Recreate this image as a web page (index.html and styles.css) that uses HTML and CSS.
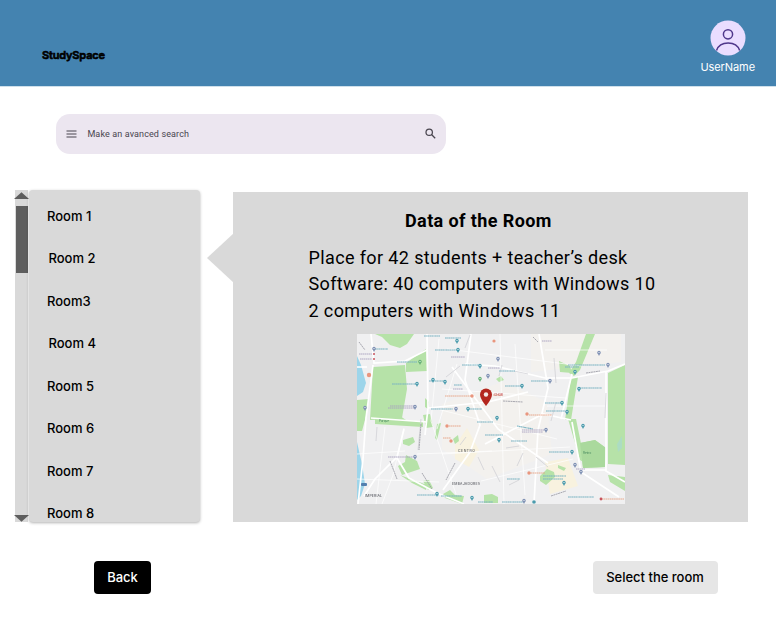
FILE: index.html
```html
<!DOCTYPE html>
<html lang="en">
<head>
<meta charset="utf-8">
<title>StudySpace</title>
<link rel="stylesheet" href="styles.css">
</head>
<body>
<header class="topbar">
  <div class="brand">StudySpace</div>
  <div class="user">
    <svg class="avatar" viewBox="0 0 36 36"><circle cx="18" cy="18" r="17.5" fill="#eaddff"/><g fill="none" stroke="#4f378b" stroke-width="1.5"><circle cx="18" cy="14.3" r="4.6"/><path d="M6.500 30.500C10 20.500 26.300 20.500 29.700 30.500"/></g></svg>
    <span class="username">UserName</span>
  </div>
</header>
<div class="search">
  <svg class="menu-icon" viewBox="0 0 11 8"><path d="M.5 1h10M.5 4h10M.5 7h10" stroke="#49454f" stroke-width="1.15"/></svg>
  <span class="placeholder">Make an avanced search</span>
  <svg class="search-icon" viewBox="0 0 11 11"><g fill="none" stroke="#49454f" stroke-width="1.25"><circle cx="4.200" cy="4.200" r="3.200"/><path d="M6.500 6.500l3.700 3.700"/></g></svg>
</div>
<main class="content">
  <div class="scrollbar">
    <svg class="arrow" viewBox="0 0 15 7"><path d="M0 7L7.500 .3 15 7z" fill="#5e5e5e"/></svg>
    <div class="thumb"></div>
    <svg class="arrow arrow-down" viewBox="0 0 15 7"><path d="M0 0L7.500 6.700 15 0z" fill="#5e5e5e"/></svg>
  </div>
  <ul class="rooms">
    <li>Room 1</li><li class="inset">Room 2</li><li>Room3</li><li class="inset">Room 4</li><li>Room 5</li><li>Room 6</li><li>Room 7</li><li>Room 8</li>
  </ul>
  <svg class="pointer" viewBox="0 0 27 50"><path d="M27 0v50L0 25z" fill="#d9d9d9"/></svg>
  <section class="panel">
    <h1>Data of the Room</h1>
    <p class="details"><span>Place for 42 students + teacher’s desk</span><span>Software: 40 computers with Windows 10</span><span>2 computers with Windows 11</span></p>
    <svg class="map" viewBox="0 0 268 170">
      <rect width="268" height="170" fill="#f0f0f1"/>
      <g class="terrain">
      <path d="M85 70L145 48 190 68 195 120 130 145 85 115zM174 0h90v28l-90 10z" fill="#f3f1ee"/>
      <path d="M98 112l12-18 12 22-10 17-14-8zM188 128l23-4 10 28-28 8z" fill="#f8f2df"/>
      <g fill="#b6e2a8">
        <path d="M18 0h39l-7 10-7 4-10-3-8-8z"/>
        <path d="M16 33l32-2 2 24-5 29-32 2zM49 29l20-14 1 22-21 1zM0 66l12-1-3 17-4 15H0z"/>
        <path d="M18 83l25-1 6 4 17 2v5l-48-3zM66 81l7-1 3 13-7 1zM46 106l10-3 2 5-6 4-6-2z"/>
        <path d="M41 132l7-4 1-7 11 6 3 8-9 3-9 3zM43 141l27 10-1 5-14-7zM66 147l6-1 4 8-5 2zM86 160l7-4 5 5 9 1-2 8-17-6z"/>
        <path d="M229 0h9l-15 36-6 6-5-3 7-11zM214 43h7l-7 43h-6zM211 85h8l9 44-5-3z"/>
        <path d="M251 39l17-8v100l-17-1zM251 141l17 2v14l-15-9zM223 109l15-3 11 8-1 19-22 1z"/>
        <path d="M202 27l11 5 2 7-12-1zM183 142l7-7 7 3 1 5-9 8-6-4zM127 161l8-1 6 3v6h-14zM96 105l5-4 1 6-4 3zM80 90l4-1-4 17-2-2zM68 64l4 4-1 7-3-2zM139 45l5-3 3 4-5 2zM201 131l8 3-2 3-6-3z"/>
      </g>
      <path d="M223 109l15-3 11 8-1 19-22 1z" fill="#aad99d"/>
      <g fill="#9dd5ea"><path d="M0 22l4 9 5 18-3 9-6 4zM0 108l5 22 3 20-4 12-4 4z"/><path d="M260 110l5-8v12l-4 4z" opacity=".4"/></g>
      <g fill="none" stroke="#fff" stroke-width="1.700">
        <path d="M14 0l3 29 31-2 22-11M16 31L9 84 6 125 1 170M14 84l56 4M47 95l-7 28-22 22-11 17"/>
        <path d="M70 0l1 74-3 27M40 124l12 20 28 15 27 11M71 74l60-6 40-10"/>
        <path d="M0 33h10M108 30l30 2 50 12 27 0 36-7 17-7M114 0l-6 46 15 45-10 27-27 38M182 0l9 54-10 42-4 74M215 40l-11 45M215 88l9 50 38 25"/>
        <path d="M249 38v99l19 11M225 136h24M95 33l46 62 50 34M128 110l58-30 28 6"/>
      </g>
      <g fill="none" stroke="#fff" stroke-width=".7"><path d="M28 93l-9 77M47 94l-11 47-11 29M82 5l-8 82 25 73M143 0l4 170M158 10l10 151M90 15l135 17M80 75l120 30M85 120l128-7M85 55l124 9M188 16h62M190 72h60M100 30l-20 65M60 120l75-3M124 147l92-22M0 120l48-3M0 145l82 3"/></g>
      </g>
      <g class="labels">
      <g fill="none" stroke="#d0d1d6" stroke-width=".8"><path d="M89 43l14-11M113 1l-5 13M142 42l3-11M197 24l2 25M199 68l-5 19M249 59l-1 25M64 85l-3 31M157 37l14 3M160 132l6-13M179 123l12 10M121 123l6 13M135 132l8 16M20 93l-1 14M109 103l-6 8M149 114l13-2M152 151l10-5"/></g>
      <g fill="none" stroke="#96969f" stroke-width=".8" stroke-dasharray="2 .5"><path d="M64 90l-2 26M33 127l7 18M65 139l10 16M98 129l-9 17M229 39l14-2M194 162l15-5M2 8l6 8M146 67l20 1M176 3l5 5"/></g>
      <g fill="none" stroke="#78b2c2" stroke-width="1.100" stroke-dasharray="1.800 .35 1.200 .3">
        <path d="M18 15h13M67 2h16M88 4h16M78 16h23M105 31h17M40 28h20M35 50h24M72 47h15M97 51h8M142 37h16M174 47h18M148 52h16M221 54h24M211 31h21M188 69h17M189 77h19M232 31h16M208 33h14M112 75h13M74 75h22M120 88h16M160 92l16 3M128 101h18M154 107h16M192 118h20M186 142h23M186 145h20M150 145h13M60 161h22M84 162h21M121 168h15M145 168h22M211 163h26"/></g>
      <g fill="none" stroke="#a8a0c0" stroke-width=".9" stroke-dasharray="1.500 .4"><path d="M33 72h24M31 74h27M31 123h25M2 20h13M3 25h12M94 23h14M131 34h12M185 7h10M165 96h22M165 98h21M219 135h9M96 55h10"/></g>
      <g fill="none" stroke="#e6a082" stroke-width=".9" stroke-dasharray="1.500 .4"><path d="M88 62h26M136 61h9M172 81h23M92 92h12M86 104h8M172 139h16M245 165h22"/></g>
      <g class="map-label">
        <text x="101" y="118" textLength="17">CENTRO</text><text x="95" y="151" textLength="28">EMBAJADORES</text><text x="8" y="163" textLength="17">IMPERIAL</text>
        <text x="137" y="62" class="red" textLength="9">CHOR</text><text x="226" y="120" class="park">Retiro</text><text x="22" y="88" class="park">Parque</text>
      </g>
      <defs><g id="place"><circle cy="-1.500" r="1.700"/><path d="M-1.500-1L0 1.900 1.500-1z"/><circle cy="-1.500" r=".6" fill="#fff"/></g></defs>
      <g fill="#4b9bad"><use href="#place" x="100" y="8"/><use href="#place" x="101" y="17"/><use href="#place" x="123" y="33"/><use href="#place" x="76" y="47"/><use href="#place" x="88" y="49"/><use href="#place" x="60" y="51"/><use href="#place" x="111" y="76"/><use href="#place" x="165" y="53"/><use href="#place" x="218" y="39"/><use href="#place" x="222" y="56"/><use href="#place" x="205" y="70"/><use href="#place" x="210" y="79"/><use href="#place" x="140" y="85"/><use href="#place" x="142" y="107"/><use href="#place" x="215" y="119"/><use href="#place" x="226" y="93"/><use href="#place" x="207" y="150"/><use href="#place" x="80" y="161"/><use href="#place" x="115" y="165"/><circle cx="177" cy="168" r="1.800"/></g>
      <g fill="#7f91b4"><use href="#place" x="17" y="16"/><use href="#place" x="141" y="26"/><use href="#place" x="193" y="48"/><use href="#place" x="131" y="43"/><use href="#place" x="242" y="20"/><use href="#place" x="251" y="32"/><use href="#place" x="58" y="74"/><use href="#place" x="58" y="124"/><use href="#place" x="99" y="76"/><use href="#place" x="189" y="97"/><use href="#place" x="218" y="132"/><use href="#place" x="224" y="139"/><use href="#place" x="167" y="168"/><use href="#place" x="8" y="75"/><rect x="4" y="149" width="6" height="3" rx="1" fill="#527fae"/></g>
      <g fill="#66b177"><use href="#place" x="63" y="29"/><use href="#place" x="123" y="46"/></g>
      <g fill="#e9967e"><circle cx="115" cy="62" r="1.700"/><circle cx="170" cy="80" r="1.700"/><circle cx="90" cy="92" r="1.700"/><circle cx="94" cy="107" r="1.700"/><circle cx="172" cy="139" r="1.700"/><circle cx="137" cy="7" r="1.600"/><circle cx="12" cy="41" r="2.200"/></g>
      <g fill="#c8535d"><circle cx="17" cy="20" r="1"/><circle cx="17" cy="25" r="1"/><circle cx="244" cy="165" r="1.400"/></g>
      </g>
      <path d="M129 54.500a6 6 0 0 0-6 6c0 4.500 6 11.500 6 11.500s6-7 6-11.500a6 6 0 0 0-6-6z" fill="#b3261e"/><circle cx="129" cy="60.500" r="2.200" fill="#f2e9e7"/>
    </svg>
  </section>
</main>
<footer class="actions"><button class="back">Back</button><button class="select">Select the room</button></footer>
</body>
</html>
```

FILE: styles.css
```css
* { box-sizing: border-box; }
body { margin: 0; width: 776px; height: 630px; overflow: hidden; background: #fff; color: #000; font-family: Inter, "Liberation Sans", sans-serif; }
svg { display: block; }
.topbar { height: 86px; background: #4483b0; display: flex; justify-content: space-between; padding: 20px 21px 0 42px; box-shadow: 0 1px 0 #cfe0eb; }
.brand { font-size: 11px; line-height: 14px; margin-top: 28px; font-weight: 600; letter-spacing: -.17px; -webkit-text-stroke: .6px #000; }
.user { display: flex; flex-direction: column; align-items: center; color: #fff; }
.avatar { width: 36px; height: 36px; }
.username { font-size: 11px; line-height: 14px; margin-top: 4px; letter-spacing: -.08px; }
.search { width: 390px; height: 40px; margin: 27.500px 0 0 56.400px; border-radius: 14px; background: #ece6f0; display: flex; align-items: center; padding: 0 10px; color: #49454f; }
.menu-icon { width: 11px; height: 8px; }
.placeholder { font: 9px/14px Roboto, sans-serif; letter-spacing: .12px; margin-left: 10px; flex: 1; }
.search-icon { width: 11px; height: 11px; }
.content { display: flex; height: 332px; margin: 36px 0 0 14px; }
.scrollbar { width: 14px; padding: 2px 0 0; background: linear-gradient(90deg, transparent 1px, #d9d9d9 1px); display: flex; flex-direction: column; align-items: flex-start; }
.arrow { width: 15px; height: 7px; flex: none; }
.thumb { width: 12px; height: 67px; margin: 7px 0 0 2px; background: #5e5e5e; }
.arrow-down { margin-top: auto; }
.rooms { list-style: none; width: 171px; margin: 0 0 0 1px; padding: 5px 0 0 18px; background: #d9d9d9; border-radius: 4px; box-shadow: 0 1px 3px rgba(0,0,0,.3); overflow: hidden; font-size: 13px; font-weight: 500; }
.rooms li { height: 42.500px; line-height: 42.500px; }
.rooms .inset { padding-left: 1.500px; }
.pointer { width: 27px; height: 50px; margin: 43px -1px 0 7px; }
.panel { width: 515px; height: 329.500px; margin-top: 2.500px; background: #d9d9d9; font-family: Roboto, sans-serif; }
h1 { margin: 18px 0 0 172px; font-size: 18px; line-height: 21px; letter-spacing: .4px; font-weight: 700; }
.details { margin: 13.500px 0 0 75.500px; font-size: 18px; line-height: 26.600px; letter-spacing: .38px; white-space: nowrap; }
.details span { display: block; }
.map { width: 268px; height: 170px; margin: 10px 0 0 124px; }
.terrain { filter: blur(.35px); }
.labels { filter: blur(.4px); }
.map-label { font: 3.500px Inter, sans-serif; fill: #45474f; }
.red { fill: #c44c50; }
.park { font-size: 3px; fill: #46875d; }
.actions { display: flex; justify-content: space-between; margin: 39.500px 58.500px 0 94px; }
button { height: 33px; border: 0; border-radius: 4px; padding: 0; font: 500 13px/33px Inter, sans-serif; }
.back { width: 57px; background: #000; color: #fff; }
.select { width: 125px; background: #e6e6e6; color: #000; }
```
